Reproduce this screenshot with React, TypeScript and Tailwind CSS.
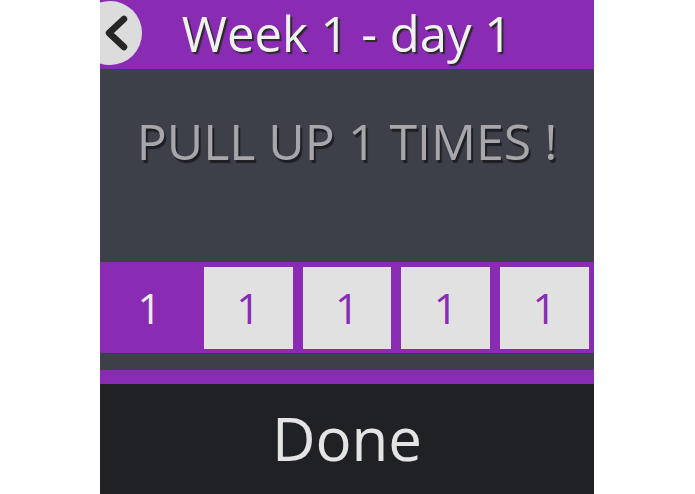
import React from "react";

export default function App() {
  const cells = [0, 1, 2, 3, 4];
  return (
    <div className="w-full h-[494px] bg-white" style={{ fontFamily: '"Open Sans", "Noto Sans", sans-serif' }}>
      <div className="w-[494px] h-full ml-[100px] flex flex-col">
        <div className="relative h-[69px] bg-[#8a2bb4] overflow-hidden flex items-center justify-center">
          <div className="absolute left-[-22px] top-[1px] w-[64px] h-[64px] rounded-full bg-[#dcdcdc] flex items-center justify-end pr-[14px]">
            <svg width="24" height="36" viewBox="0 0 24 36">
              <path d="M20 4 L5 18 L20 32" fill="none" stroke="#262626" strokeWidth="6.5" strokeLinecap="round" strokeLinejoin="round" />
            </svg>
          </div>
          <span className="text-[49px] leading-none text-[#f0f0f0] mb-[3px]" style={{ textShadow: "2px 2px 1px #2a2a2a" }}>
            Week 1 - day 1
          </span>
        </div>
        <div className="h-[193px] bg-[#3d4049] flex justify-center pt-[47px]">
          <span className="text-[50px] leading-none text-[#a7a7ab]" style={{ textShadow: "2px 3px 1px #1e1f24" }}>
            PULL UP 1 TIMES !
          </span>
        </div>
        <div className="h-[91px] bg-[#8a2bb4] flex pt-[5px] pb-[4px]">
          {cells.map((i) => (
            <div key={i} className="flex-1 px-[5px]">
              {i === 0 ? (
                <div className="h-full flex items-center justify-center text-[42px] leading-none text-[#ececec]">1</div>
              ) : (
                <div className="h-full bg-[#e1e1e1] flex items-center justify-center text-[42px] leading-none text-[#8a2bb4]">1</div>
              )}
            </div>
          ))}
        </div>
        <div className="h-[17px] bg-[#3d4049]" />
        <div className="h-[14px] bg-[#8a2bb4]" />
        <div className="flex-1 bg-[#202125] flex items-center justify-center">
          <span className="text-[60px] leading-none text-[#e4e4e4] mb-[2px]">Done</span>
        </div>
      </div>
    </div>
  );
}
